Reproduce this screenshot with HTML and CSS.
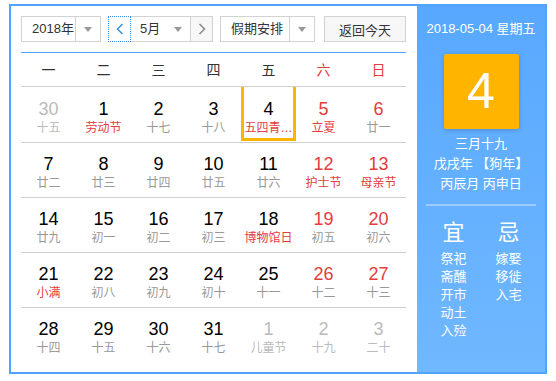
FILE: index.html
```html
<!DOCTYPE html>
<html lang="zh-CN">
<head>
    <meta charset="UTF-8">
    <meta name="viewport" content="width=device-width, initial-scale=1.0">
    <title>万年历</title>
    <link rel="stylesheet" href="styles.css">
</head>
<body>
    <div class="calendar">
        <div class="main">
            <div class="toolbar">
                <div class="select year-select">
                    <span class="select-text">2018年</span>
                    <span class="select-arrow"></span>
                </div>
                <div class="month-group">
                    <button class="nav-btn prev focus">
                        <svg width="8" height="12" viewBox="0 0 8 12"><path d="M6.5 1 L1.5 6 L6.5 11" fill="none" stroke="#3a8ee6" stroke-width="1.5"/></svg>
                    </button>
                    <div class="select month-select">
                        <span class="select-text">5月</span>
                        <span class="select-arrow plain"></span>
                    </div>
                    <button class="nav-btn next">
                        <svg width="8" height="12" viewBox="0 0 8 12"><path d="M1.5 1 L6.5 6 L1.5 11" fill="none" stroke="#888" stroke-width="1.5"/></svg>
                    </button>
                </div>
                <div class="select holiday-select">
                    <span class="select-text">假期安排</span>
                    <span class="select-arrow"></span>
                </div>
                <button class="today-btn">返回今天</button>
            </div>

            <div class="weekdays">
                <span>一</span><span>二</span><span>三</span><span>四</span><span>五</span>
                <span class="red">六</span><span class="red">日</span>
            </div>

            <div class="days" id="days"></div>
        </div>

        <div class="side">
            <div class="side-date">2018-05-04 星期五</div>
            <div class="big-day">4</div>
            <div class="lunar-info">
                <div>三月十九</div>
                <div>戊戌年 【狗年】</div>
                <div>丙辰月 丙申日</div>
            </div>
            <div class="side-line"></div>
            <div class="yiji">
                <div class="yiji-col">
                    <div class="yiji-title">宜</div>
                    <div>祭祀</div>
                    <div>斋醮</div>
                    <div>开市</div>
                    <div>动土</div>
                    <div>入殓</div>
                </div>
                <div class="yiji-col">
                    <div class="yiji-title">忌</div>
                    <div>嫁娶</div>
                    <div>移徙</div>
                    <div>入宅</div>
                </div>
            </div>
        </div>
    </div>

    <script>
        // day, lunar text, flags: o = other month, w = weekend, f = festival, s = selected
        var days = [
            ['30', '十五', 'o'], ['1', '劳动节', 'f'], ['2', '十七', ''], ['3', '十八', ''], ['4', '五四青…', 'fs'], ['5', '立夏', 'wf'], ['6', '廿一', 'w'],
            ['7', '廿二', ''], ['8', '廿三', ''], ['9', '廿四', ''], ['10', '廿五', ''], ['11', '廿六', ''], ['12', '护士节', 'wf'], ['13', '母亲节', 'wf'],
            ['14', '廿九', ''], ['15', '初一', ''], ['16', '初二', ''], ['17', '初三', ''], ['18', '博物馆日', 'f'], ['19', '初五', 'w'], ['20', '初六', 'w'],
            ['21', '小满', 'f'], ['22', '初八', ''], ['23', '初九', ''], ['24', '初十', ''], ['25', '十一', ''], ['26', '十二', 'w'], ['27', '十三', 'w'],
            ['28', '十四', ''], ['29', '十五', ''], ['30', '十六', ''], ['31', '十七', ''], ['1', '儿童节', 'o'], ['2', '十九', 'o'], ['3', '二十', 'o']
        ];

        var box = document.getElementById('days');
        days.forEach(function(d) {
            var cell = document.createElement('div');
            var cls = 'day';
            if (d[2].indexOf('o') > -1) cls += ' other';
            if (d[2].indexOf('w') > -1) cls += ' weekend';
            if (d[2].indexOf('f') > -1) cls += ' festival';
            if (d[2].indexOf('s') > -1) cls += ' selected';
            cell.className = cls;
            cell.innerHTML = '<span class="num">' + d[0] + '</span><span class="lunar">' + d[1] + '</span>';
            box.appendChild(cell);
        });
    </script>
</body>
</html>
```

FILE: styles.css
```css
body {
    margin: 0;
    padding: 0;
    background-color: #ffffff;
    font-family: "Liberation Sans", "Noto Sans CJK SC", sans-serif;
    color: #333333;
}

.calendar {
    margin: 4px 0 0 9px;
    width: 534px;
    height: 366px;
    border: 2px solid #4fa5fe;
    display: flex;
    background-color: #ffffff;
}

.main {
    width: 385px;
    padding: 10px 11px 0 10px;
}

/* toolbar */
.toolbar {
    display: flex;
    height: 26px;
    padding-bottom: 10px;
    border-bottom: 1px solid #4fa5fe;
}

.select {
    display: flex;
    box-sizing: border-box;
    height: 26px;
    border: 1px solid #d2d2d2;
    font-size: 13px;
    line-height: 24px;
    color: #333333;
}

.select-text {
    flex: 1;
    padding-left: 10px;
}

.select-arrow {
    width: 24px;
    border-left: 1px solid #d2d2d2;
    position: relative;
}

.select-arrow::after {
    content: "";
    position: absolute;
    left: 8px;
    top: 10px;
    border-left: 4px solid transparent;
    border-right: 4px solid transparent;
    border-top: 5px solid #999999;
}

.select-arrow.plain {
    border-left: none;
}

.year-select {
    width: 80px;
}

.month-group {
    display: flex;
    margin-left: 7px;
}

.nav-btn {
    box-sizing: border-box;
    width: 23px;
    height: 26px;
    border: 1px solid #d2d2d2;
    background-color: #f7f7f7;
    padding: 0;
    display: flex;
    align-items: center;
    justify-content: center;
}

.nav-btn.focus {
    border: 1px dotted #3a8ee6;
    background-color: #ffffff;
}

.month-select {
    width: 59px;
    border-left: none;
    border-right: none;
}

.month-select .select-text {
    padding-left: 9px;
}

.holiday-select {
    width: 95px;
    margin-left: 7px;
}

.today-btn {
    box-sizing: border-box;
    width: 82px;
    height: 26px;
    margin-left: 9px;
    border: 1px solid #d2d2d2;
    background-color: #f7f7f7;
    font-family: "Liberation Sans", "Noto Sans CJK SC", sans-serif;
    font-size: 13px;
    color: #333333;
    padding: 0;
}

/* weekdays */
.weekdays {
    display: grid;
    grid-template-columns: repeat(7, 55px);
    height: 33px;
    line-height: 34px;
    text-align: center;
    font-size: 14px;
    color: #333333;
    border-bottom: 1px solid #cfcfcf;
}

.red {
    color: #e33c3c;
}

/* days */
.days {
    display: grid;
    grid-template-columns: repeat(7, 55px);
    grid-auto-rows: 55px;
}

.day {
    display: flex;
    flex-direction: column;
    align-items: center;
    box-sizing: border-box;
    padding-top: 11px;
    border-top: 1px solid #cfcfcf;
}

.days .day:nth-child(-n+7) {
    border-top: none;
    padding-top: 12px;
}

.num {
    font-size: 18px;
    line-height: 20px;
    color: #000000;
}

.lunar {
    font-size: 12px;
    line-height: 18px;
    color: #999999;
    white-space: nowrap;
}

.weekend .num {
    color: #e33c3c;
}

.festival .lunar {
    color: #e33c3c;
}

.other .num,
.other .lunar {
    color: #bbbbbb;
}

.day.selected {
    border: 3px solid #ffb400;
    padding-top: 9px;
    height: 54px;
}

/* side panel */
.side {
    flex: 1;
    background: linear-gradient(#58a8ff, #70b8ff);
    color: #ffffff;
    display: flex;
    flex-direction: column;
    align-items: center;
}

.side-date {
    margin-top: 15px;
    font-size: 13px;
    line-height: 16px;
}

.big-day {
    margin-top: 17px;
    width: 75px;
    height: 75px;
    border-radius: 2px;
    background-color: #ffb400;
    box-shadow: 0 1px 4px rgba(0, 0, 0, 0.2);
    font-size: 50px;
    line-height: 75px;
    text-align: center;
}

.lunar-info {
    margin-top: 5px;
    font-size: 13px;
    line-height: 20px;
    text-align: center;
}

.side-line {
    margin-top: 10px;
    width: 110px;
    height: 2px;
    background-color: #9ccbff;
}

.yiji {
    display: grid;
    grid-template-columns: 44px 44px;
    column-gap: 11px;
    margin-top: 13px;
    font-size: 13px;
    line-height: 18px;
    text-align: center;
}

.yiji-title {
    font-size: 22px;
    line-height: 28px;
    margin-bottom: 3px;
}
```
